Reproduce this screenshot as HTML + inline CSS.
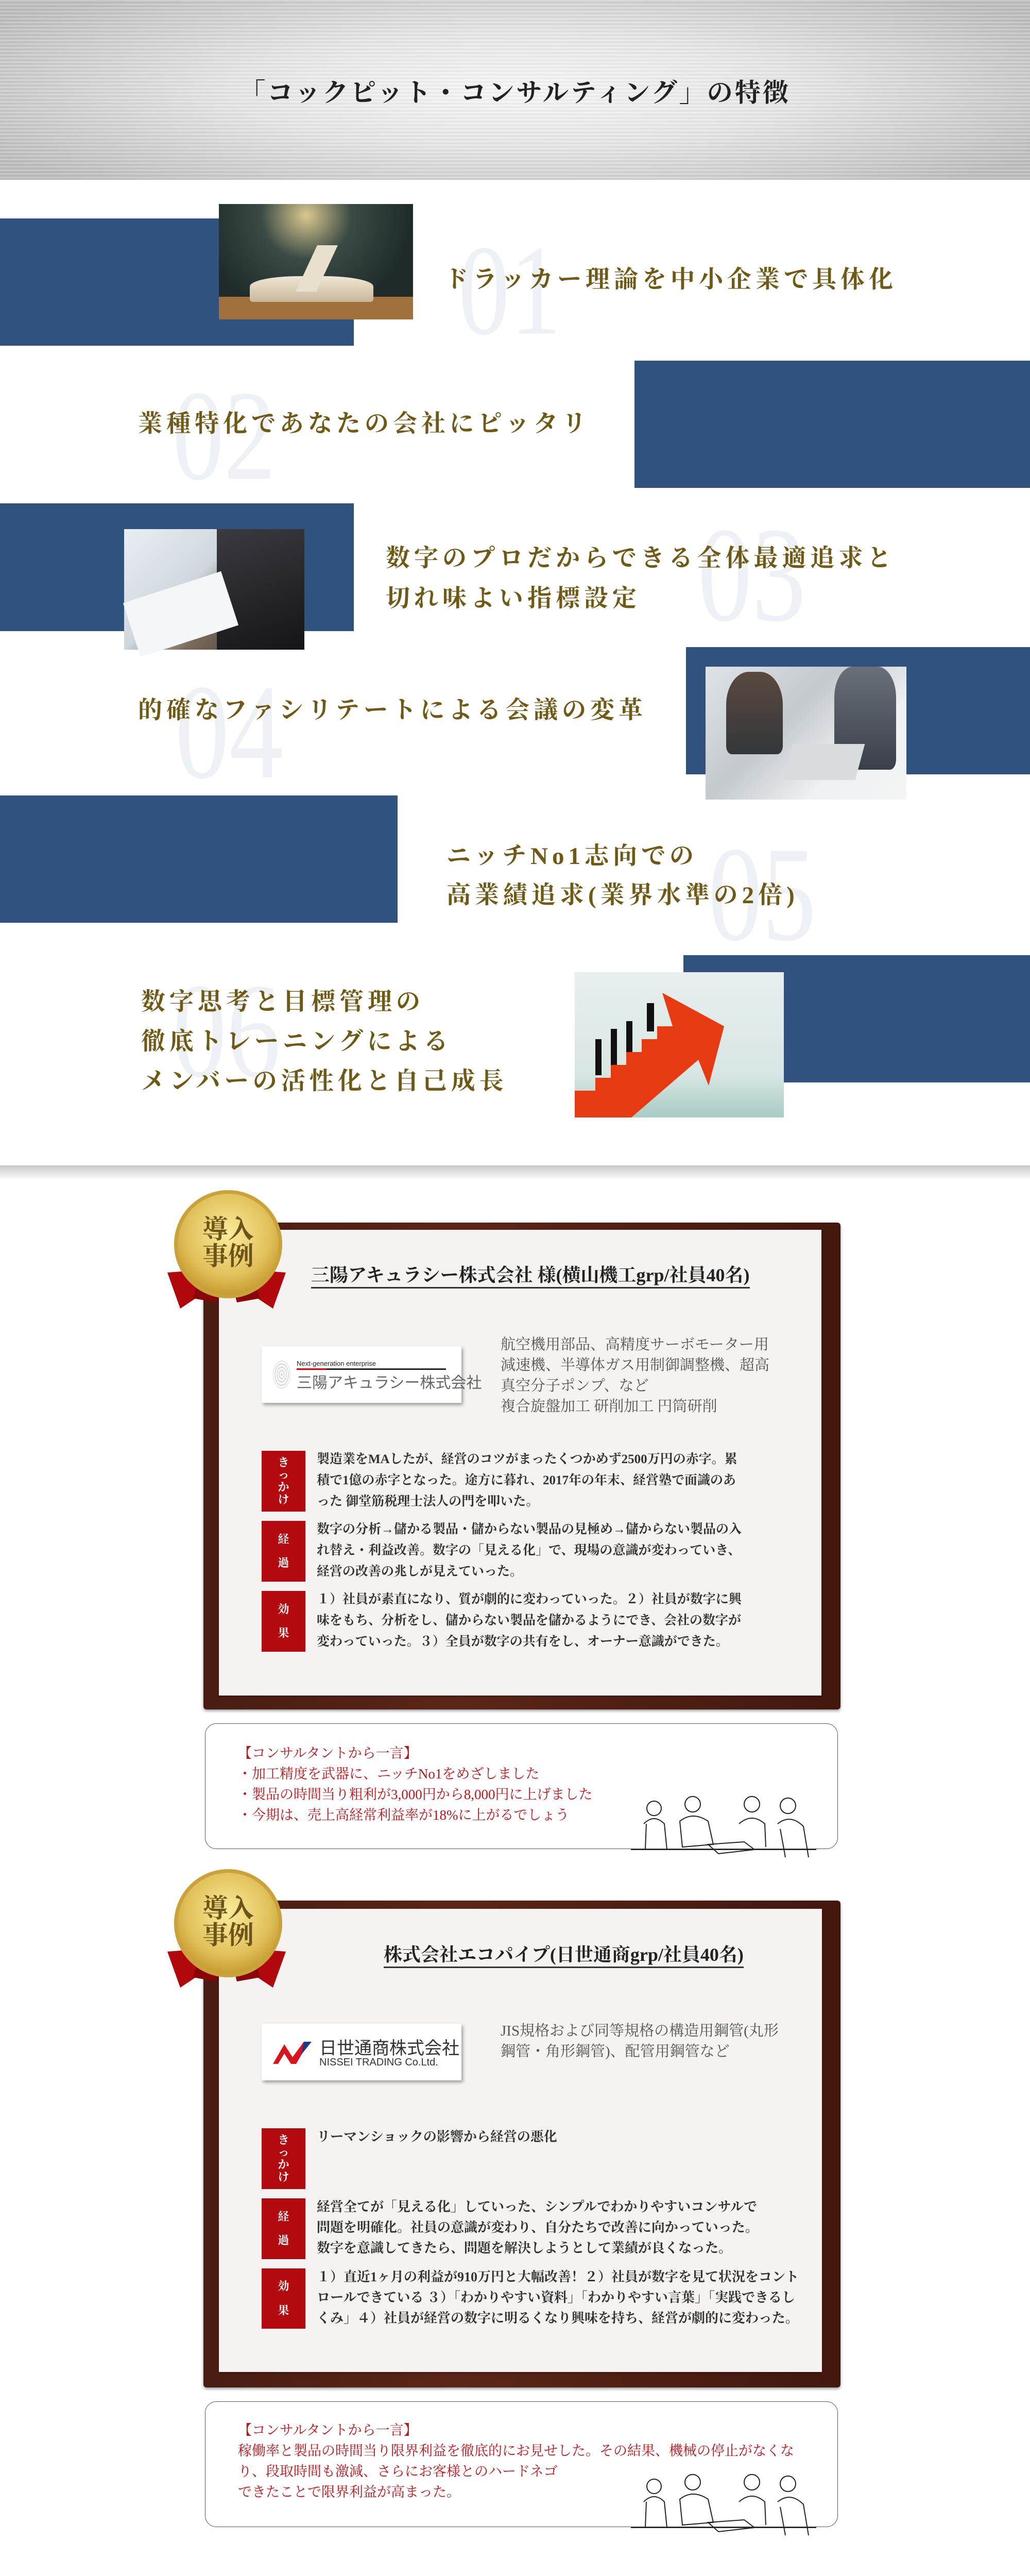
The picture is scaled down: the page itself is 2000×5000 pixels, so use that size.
<!DOCTYPE html>
<html><head><meta charset="utf-8">
<style>
*{margin:0;padding:0;box-sizing:border-box}
body{width:2000px;height:5000px;position:relative;background:#fff;overflow:hidden;font-family:"Liberation Serif","Noto Serif CJK SC",serif}
.a{position:absolute}
.hdr{left:0;top:0;width:2000px;height:349px;background:radial-gradient(ellipse 60% 70% at 50% 50%,#f7f7f7 0%,#e6e6e6 45%,#bdbdbd 100%);}
.hdr:after{content:"";position:absolute;inset:0;background:repeating-linear-gradient(180deg,rgba(255,255,255,.18) 0 3px,rgba(0,0,0,.03) 3px 7px)}
.ttl{left:0;width:2000px;top:140px;text-align:center;font-size:50px;font-weight:700;color:#222;letter-spacing:4px;z-index:2;font-family:"Liberation Serif","Noto Serif CJK SC",serif}
.blue{background:#31517f}
.num{font-family:"Liberation Serif",serif;color:#edf1f6;line-height:1;z-index:1;transform:scaleY(1.25);transform-origin:left top}
.ft{font-size:47px;font-weight:700;color:#6e5a14;letter-spacing:8px;white-space:nowrap;z-index:3;line-height:1}
.frame{background:linear-gradient(90deg,#4a1c12,#5a2617 40%,#44170e);border-radius:6px;box-shadow:0 3px 6px rgba(0,0,0,.4)}
.paper{background:#f4f3f1;box-shadow:0 2px 4px rgba(0,0,0,.3)}
.ctitle{font-size:36px;font-weight:700;color:#222;white-space:nowrap;border-bottom:3px solid #333;line-height:1.15;padding-bottom:2px}
.logo{background:#fff;box-shadow:3px 4px 6px rgba(0,0,0,.35)}
.desc{font-size:29px;color:#555;line-height:40px;white-space:nowrap}
.lab{background:#b30a10;width:85px;color:#fff;font-size:22px;font-weight:700;display:flex;flex-direction:column;align-items:center;justify-content:center;line-height:1.1}
.body{font-size:25px;font-weight:700;color:#333;line-height:41px;white-space:nowrap}
.cbox{border:1.5px solid #555;border-radius:22px;background:#fff}
.ctext{font-size:27px;color:#c0151b;line-height:40px;white-space:nowrap}
</style></head><body>

<div class="a hdr"></div>
<div class="a ttl">「コックピット・コンサルティング」の特徴</div>

<!-- F1 -->
<div class="a blue" style="left:0;top:424px;width:687px;height:247px"></div>
<div class="a" style="left:425px;top:396px;width:377px;height:224px;background:radial-gradient(ellipse at 45% 10%,#d8c890 0%,#3b4a44 30%,#1e2b2a 70%);overflow:hidden">
 <div class="a" style="left:0;top:180px;width:377px;height:44px;background:#a0703a"></div>
 <div class="a" style="left:60px;top:140px;width:240px;height:50px;background:linear-gradient(180deg,#efe6d4,#c8b89a);border-radius:40% 40% 6px 6px"></div>
 <div class="a" style="left:170px;top:80px;width:40px;height:90px;background:#e8dfcc;transform:skewX(-25deg)"></div>
</div>
<div class="a num" style="left:890px;top:440px;font-size:200px">01</div>
<div class="a ft" style="left:863px;top:520px">ドラッカー理論を中小企業で具体化</div>

<!-- F2 -->
<div class="a blue" style="left:1232px;top:700px;width:768px;height:247px"></div>
<div class="a num" style="left:335px;top:722px;font-size:200px">02</div>
<div class="a ft" style="left:268px;top:800px">業種特化であなたの会社にピッタリ</div>

<!-- F3 -->
<div class="a blue" style="left:0;top:977px;width:687px;height:248px"></div>
<div class="a" style="left:241px;top:1027px;width:350px;height:234px;background:linear-gradient(135deg,#e9eef2 0%,#cfd7de 40%,#7a6a5a 60%,#2a2a2e 100%)">
 <div class="a" style="left:180px;top:0;width:170px;height:234px;background:linear-gradient(160deg,#3a3a40,#151518)"></div>
 <div class="a" style="left:10px;top:110px;width:200px;height:110px;background:#f4f6f8;transform:rotate(-18deg)"></div>
</div>
<div class="a num" style="left:1355px;top:985px;font-size:210px">03</div>
<div class="a ft" style="left:749px;top:1045px;line-height:78px">数字のプロだからできる全体最適追求と<br>切れ味よい指標設定</div>

<!-- F4 -->
<div class="a blue" style="left:1332px;top:1256px;width:668px;height:247px"></div>
<div class="a" style="left:1370px;top:1294px;width:390px;height:258px;background:linear-gradient(135deg,#dfe3e6 0%,#c4c9cd 40%,#eef0f2 70%,#f5f5f5 100%)">
 <div class="a" style="left:40px;top:10px;width:110px;height:160px;background:linear-gradient(180deg,#5a4a40,#33363a);border-radius:40% 40% 10% 10%"></div>
 <div class="a" style="left:250px;top:0;width:120px;height:200px;background:linear-gradient(180deg,#6a7078,#3b4048);border-radius:30% 30% 10% 10%"></div>
 <div class="a" style="left:160px;top:150px;width:140px;height:70px;background:#d9dcdf;transform:skewX(-15deg)"></div>
</div>
<div class="a num" style="left:340px;top:1290px;font-size:210px">04</div>
<div class="a ft" style="left:268px;top:1356px">的確なファシリテートによる会議の変革</div>

<!-- F5 -->
<div class="a blue" style="left:0;top:1544px;width:772px;height:247px"></div>
<div class="a num" style="left:1375px;top:1605px;font-size:210px">05</div>
<div class="a ft" style="left:867px;top:1624px;line-height:76px">ニッチNo1志向での<br>高業績追求(業界水準の2倍)</div>

<!-- F6 -->
<div class="a blue" style="left:1327px;top:1854px;width:673px;height:247px"></div>
<div class="a" style="left:1116px;top:1887px;width:406px;height:282px;background:linear-gradient(180deg,#e8efee,#d8e6e4 70%,#a9cbc5);overflow:hidden">
 <svg class="a" style="left:0;top:0" width="406" height="282" viewBox="0 0 406 282">
  <polygon points="0,282 0,230 40,230 40,205 70,205 70,180 100,180 100,155 130,155 130,130 160,130 160,105 190,105 170,40 290,105 260,220 240,170 110,282" fill="#e83a10"/>
  <g fill="#111"><rect x="40" y="130" width="12" height="70"/><rect x="70" y="110" width="12" height="70"/><rect x="100" y="95" width="12" height="60"/><rect x="140" y="60" width="14" height="55"/></g>
 </svg>
</div>
<div class="a num" style="left:335px;top:1870px;font-size:210px">06</div>
<div class="a ft" style="left:274px;top:1907px;line-height:77px">数字思考と目標管理の<br>徹底トレーニングによる<br>メンバーの活性化と自己成長</div>

<!-- shadow -->
<div class="a" style="left:0;top:2262px;width:2000px;height:28px;background:linear-gradient(180deg,#c8c8c8,#f4f4f4 80%,#fff)"></div>

<!-- CASE 1 -->
<div class="a frame" style="left:395px;top:2373px;width:1237px;height:945px"></div>
<div class="a paper" style="left:425px;top:2387px;width:1170px;height:904px"></div>
<svg class="a" style="left:320px;top:2300px;z-index:4" width="260" height="250" viewBox="0 0 260 250">
 <polygon points="5,170 70,165 90,200 30,240" fill="#b0080c"/><polygon points="235,170 170,165 150,200 210,240" fill="#b0080c"/>
 <polygon points="70,165 110,190 100,228 55,220" fill="#8a0508"/><polygon points="170,165 130,190 140,228 185,220" fill="#8a0508"/>
 <circle cx="123" cy="115" r="105" fill="#c9a23a"/><circle cx="123" cy="115" r="98" fill="url(#g1)"/>
 <defs><radialGradient id="g1" cx="50%" cy="40%" r="60%"><stop offset="0" stop-color="#faec9a"/><stop offset=".7" stop-color="#e1c05a"/><stop offset="1" stop-color="#c79c30"/></radialGradient></defs>
 <text x="123" y="103" text-anchor="middle" font-size="50" font-weight="700" fill="#6d5418" font-family="Noto Serif CJK SC,serif">導入</text>
 <text x="123" y="155" text-anchor="middle" font-size="50" font-weight="700" fill="#6d5418" font-family="Noto Serif CJK SC,serif">事例</text>
</svg>
<div class="a ctitle" style="left:604px;top:2455px">三陽アキュラシー株式会社 様(横山機工grp/社員40名)</div>
<div class="a logo" style="left:508px;top:2613px;width:388px;height:110px">
 <div class="a" style="left:22px;top:28px;width:34px;height:54px;border-radius:50%;background:repeating-radial-gradient(#ddd 0 2px,#fff 2px 4px)"></div>
 <div class="a" style="left:68px;top:26px;font:13px 'Liberation Sans',sans-serif;color:#222">Next-generation enterprise</div>
 <div class="a" style="left:68px;top:43px;width:290px;height:3px;background:linear-gradient(90deg,#d00 0 20%,#222 20%)"></div>
 <div class="a" style="left:68px;top:46px;font:30px 'Liberation Sans','Noto Sans CJK JP',sans-serif;color:#666;white-space:nowrap">三陽アキュラシー株式会社</div>
</div>
<div class="a desc" style="left:972px;top:2590px">航空機用部品、高精度サーボモーター用<br>減速機、半導体ガス用制御調整機、超高<br>真空分子ポンプ、など<br>複合旋盤加工 研削加工 円筒研削</div>
<div class="a lab" style="left:508px;top:2816px;height:118px">き<br>っ<br>か<br>け</div>
<div class="a lab" style="left:508px;top:2952px;height:118px;gap:22px"><span>経</span><span>過</span></div>
<div class="a lab" style="left:508px;top:3088px;height:118px;gap:22px"><span>効</span><span>果</span></div>
<div class="a body" style="left:615px;top:2812px">製造業をMAしたが、経営のコツがまったくつかめず2500万円の赤字。累<br>積で1億の赤字となった。途方に暮れ、2017年の年末、経営塾で面識のあ<br>った 御堂筋税理士法人の門を叩いた。</div>
<div class="a body" style="left:615px;top:2948px">数字の分析→儲かる製品・儲からない製品の見極め→儲からない製品の入<br>れ替え・利益改善。数字の「見える化」で、現場の意識が変わっていき、<br>経営の改善の兆しが見えていった。</div>
<div class="a body" style="left:615px;top:3084px">１）社員が素直になり、質が劇的に変わっていった。２）社員が数字に興<br>味をもち、分析をし、儲からない製品を儲かるようにでき、会社の数字が<br>変わっていった。３）全員が数字の共有をし、オーナー意識ができた。</div>

<div class="a cbox" style="left:398px;top:3345px;width:1229px;height:244px"></div>
<div class="a ctext" style="left:462px;top:3383px">【コンサルタントから一言】<br>・加工精度を武器に、ニッチNo1をめざしました<br>・製品の時間当り粗利が3,000円から8,000円に上げました<br>・今期は、売上高経常利益率が18%に上がるでしょう</div>
<svg class="a" style="left:1225px;top:3480px" width="360" height="130" viewBox="0 0 360 130" fill="none" stroke="#222" stroke-width="2">
 <circle cx="45" cy="30" r="14"/><path d="M25 60 Q45 40 65 60 L70 110 M30 60 L28 110"/>
 <circle cx="120" cy="22" r="15"/><path d="M95 55 Q120 35 150 55 L160 100 L100 105Z"/>
 <circle cx="235" cy="22" r="15"/><path d="M210 60 Q235 38 260 60 L262 105"/>
 <circle cx="305" cy="25" r="15"/><path d="M285 60 Q310 40 335 65 L345 125 M290 70 L300 125"/>
 <path d="M0 110 L360 110 M150 100 L220 95 L240 110 L170 118Z"/>
</svg>

<!-- CASE 2 -->
<div class="a frame" style="left:395px;top:3689px;width:1237px;height:945px"></div>
<div class="a paper" style="left:425px;top:3705px;width:1171px;height:899px"></div>
<svg class="a" style="left:320px;top:3618px;z-index:4" width="260" height="250" viewBox="0 0 260 250">
 <polygon points="5,170 70,165 90,200 30,240" fill="#b0080c"/><polygon points="235,170 170,165 150,200 210,240" fill="#b0080c"/>
 <polygon points="70,165 110,190 100,228 55,220" fill="#8a0508"/><polygon points="170,165 130,190 140,228 185,220" fill="#8a0508"/>
 <circle cx="123" cy="115" r="105" fill="#c9a23a"/><circle cx="123" cy="115" r="98" fill="url(#g2)"/>
 <defs><radialGradient id="g2" cx="50%" cy="40%" r="60%"><stop offset="0" stop-color="#faec9a"/><stop offset=".7" stop-color="#e1c05a"/><stop offset="1" stop-color="#c79c30"/></radialGradient></defs>
 <text x="123" y="103" text-anchor="middle" font-size="50" font-weight="700" fill="#6d5418" font-family="Noto Serif CJK SC,serif">導入</text>
 <text x="123" y="155" text-anchor="middle" font-size="50" font-weight="700" fill="#6d5418" font-family="Noto Serif CJK SC,serif">事例</text>
</svg>
<div class="a ctitle" style="left:745px;top:3774px">株式会社エコパイプ(日世通商grp/社員40名)</div>
<div class="a logo" style="left:508px;top:3928px;width:388px;height:110px">
 <svg class="a" style="left:22px;top:30px" width="80" height="50" viewBox="0 0 80 50"><polygon points="0,48 22,10 38,35 60,5 70,5 45,48 35,48 22,28 10,48" fill="#d8141c"/><polygon points="60,5 75,5 55,30" fill="#1a3a8a"/></svg>
 <div class="a" style="left:112px;top:20px;font:34px 'Liberation Sans','Noto Sans CJK JP',sans-serif;color:#333;white-space:nowrap">日世通商株式会社</div>
 <div class="a" style="left:112px;top:64px;font:20px 'Liberation Sans',sans-serif;color:#333;white-space:nowrap">NISSEI TRADING Co.Ltd.</div>
</div>
<div class="a desc" style="left:972px;top:3922px">JIS規格および同等規格の構造用鋼管(丸形<br>鋼管・角形鋼管)、配管用鋼管など</div>
<div class="a lab" style="left:508px;top:4131px;height:118px">き<br>っ<br>か<br>け</div>
<div class="a lab" style="left:508px;top:4267px;height:118px;gap:22px"><span>経</span><span>過</span></div>
<div class="a lab" style="left:508px;top:4403px;height:117px;gap:22px"><span>効</span><span>果</span></div>
<div class="a body" style="left:615px;top:4128px;font-size:26px;line-height:40px">リーマンショックの影響から経営の悪化</div>
<div class="a body" style="left:615px;top:4264px;font-size:26px;line-height:40px">経営全てが「見える化」していった、シンプルでわかりやすいコンサルで<br>問題を明確化。社員の意識が変わり、自分たちで改善に向かっていった。<br>数字を意識してきたら、問題を解決しようとして業績が良くなった。</div>
<div class="a body" style="left:615px;top:4400px;font-size:26px;line-height:40px">１）直近1ヶ月の利益が910万円と大幅改善！２）社員が数字を見て状況をコント<br>ロールできている ３）「わかりやすい資料」「わかりやすい言葉」「実践できるし<br>くみ」４）社員が経営の数字に明るくなり興味を持ち、経営が劇的に変わった。</div>

<div class="a cbox" style="left:398px;top:4661px;width:1229px;height:244px"></div>
<div class="a ctext" style="left:462px;top:4697px">【コンサルタントから一言】<br>稼働率と製品の時間当り限界利益を徹底的にお見せした。その結果、機械の停止がなくな<br>り、段取時間も激減、さらにお客様とのハードネゴ<br>できたことで限界利益が高まった。</div>
<svg class="a" style="left:1225px;top:4796px" width="360" height="130" viewBox="0 0 360 130" fill="none" stroke="#222" stroke-width="2">
 <circle cx="45" cy="30" r="14"/><path d="M25 60 Q45 40 65 60 L70 110 M30 60 L28 110"/>
 <circle cx="120" cy="22" r="15"/><path d="M95 55 Q120 35 150 55 L160 100 L100 105Z"/>
 <circle cx="235" cy="22" r="15"/><path d="M210 60 Q235 38 260 60 L262 105"/>
 <circle cx="305" cy="25" r="15"/><path d="M285 60 Q310 40 335 65 L345 125 M290 70 L300 125"/>
 <path d="M0 110 L360 110 M150 100 L220 95 L240 110 L170 118Z"/>
</svg>
</body></html>
